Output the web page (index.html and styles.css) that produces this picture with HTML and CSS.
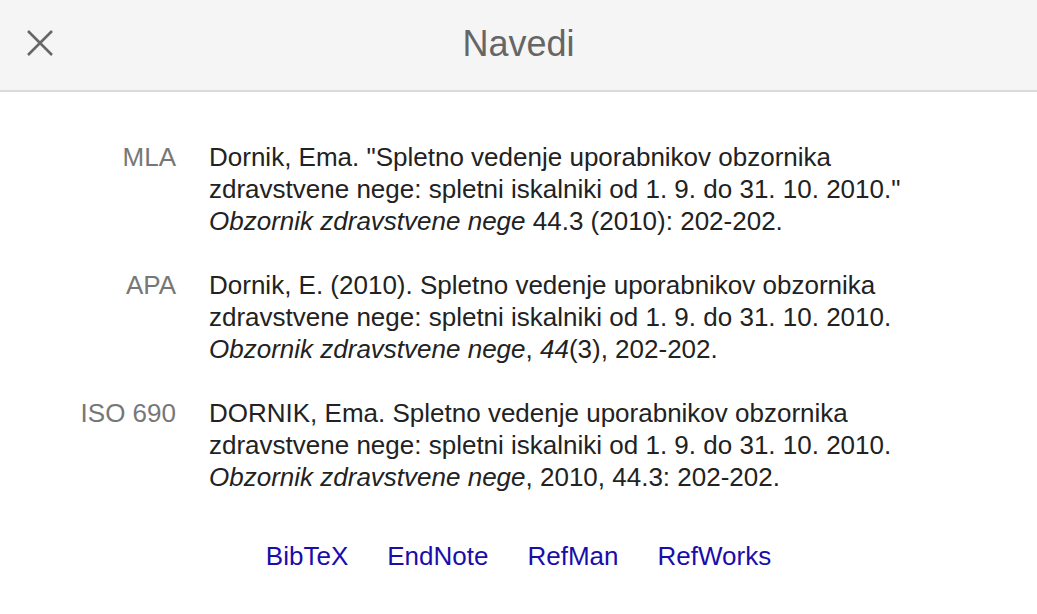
FILE: index.html
```html
<!DOCTYPE html>
<html lang="sl">
<head>
<meta charset="utf-8">
<title>Navedi</title>
<link rel="stylesheet" href="styles.css">
</head>
<body>
<div class="dialog">
  <header class="head">
    <button class="close" aria-label="Zapri">
      <svg width="26" height="26" viewBox="0 0 26 26"><path d="M1 1L25 25M25 1L1 25" stroke="#666" stroke-width="2.6" fill="none"/></svg>
    </button>
    <h1 class="title">Navedi</h1>
  </header>
  <div class="body">
    <div class="cites">
      <div class="label">MLA</div>
      <div class="cite">Dornik, Ema. "Spletno vedenje uporabnikov obzornika zdravstvene nege: spletni iskalniki od 1. 9. do 31. 10. 2010." <i>Obzornik zdravstvene nege</i> 44.3 (2010): 202-202.</div>
      <div class="label">APA</div>
      <div class="cite">Dornik, E. (2010). Spletno vedenje uporabnikov obzornika zdravstvene nege: spletni iskalniki od 1. 9. do 31. 10. 2010. <i>Obzornik zdravstvene nege</i>, <i>44</i>(3), 202-202.</div>
      <div class="label">ISO 690</div>
      <div class="cite">DORNIK, Ema. Spletno vedenje uporabnikov obzornika zdravstvene nege: spletni iskalniki od 1. 9. do 31. 10. 2010. <i>Obzornik zdravstvene nege</i>, 2010, 44.3: 202-202.</div>
    </div>
    <nav class="links">
      <a href="#">BibTeX</a>
      <a href="#">EndNote</a>
      <a href="#">RefMan</a>
      <a href="#">RefWorks</a>
    </nav>
  </div>
</div>
</body>
</html>
```
FILE: styles.css
```css
html, body {
  margin: 0;
  padding: 0;
  background: #fff;
}
body {
  font-family: "Liberation Sans", Arial, Helvetica, sans-serif;
  color: #222;
}
.dialog {
  width: 1037px;
}
.head {
  height: 90px;
  background: #f5f5f5;
  border-bottom: 2px solid #dadada;
  display: flex;
  align-items: center;
  justify-content: center;
  position: relative;
}
.close {
  position: absolute;
  left: 27px;
  top: 30px;
  width: 26px;
  height: 26px;
  padding: 0;
  border: 0;
  background: none;
  display: flex;
}
.title {
  margin: 0 0 2px 0;
  font-weight: normal;
  font-size: 36px;
  line-height: 44px;
  color: #666;
}
.body {
  padding: 49px 0 0 0;
}
.cites {
  display: grid;
  grid-template-columns: 128px 748px;
  column-gap: 33px;
  row-gap: 32px;
  padding-left: 48px;
  font-size: 26px;
  line-height: 32px;
}
.label {
  text-align: right;
  color: #777;
}
.cite {
  color: #222;
}
.links {
  display: flex;
  justify-content: center;
  gap: 39px;
  margin-top: 47px;
  font-size: 26px;
  line-height: 32px;
}
.links a {
  color: #1a0dab;
  text-decoration: none;
}
```
